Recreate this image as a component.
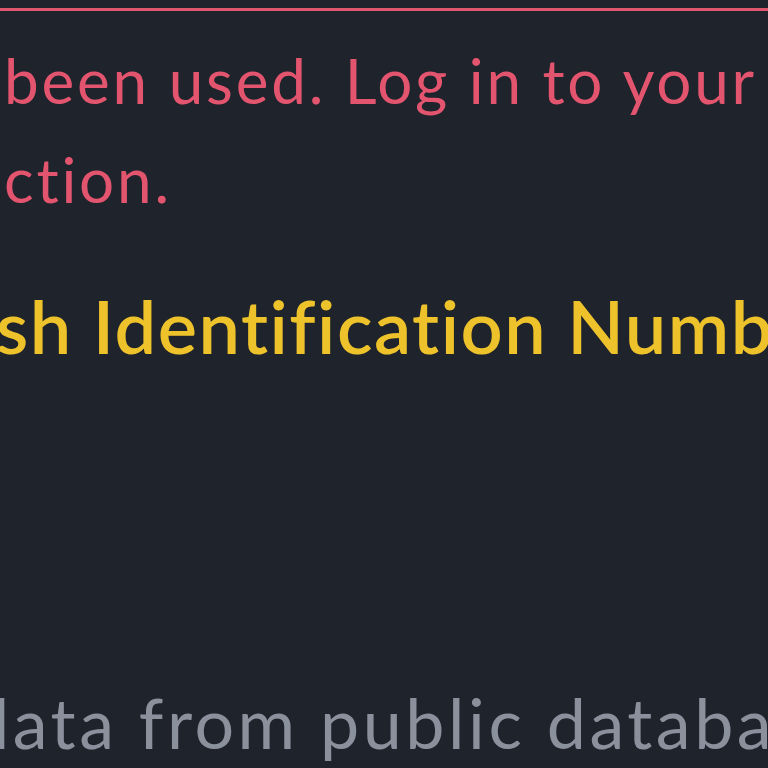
export default function App() {
  return (
    <div className="w-[768px] h-[768px] overflow-hidden bg-[#1f232c] [font-variant-ligatures:none]" style={{ fontFamily: 'Lato, "Open Sans", sans-serif' }}>
      <div className="mt-[8px] h-[3px] bg-[#e0566f] w-full" />
      <div className="mt-[20px] pl-[4px] text-[#e3556f] text-[62px] leading-[99px] tracking-[2.8px] whitespace-nowrap">
        <div>been used. Log in to your account</div>
        <div>ction.</div>
      </div>
      <div className="mt-[52px] ml-[-4px] text-[#eec22a] text-[74px] font-semibold leading-[90px] tracking-[1.5px] whitespace-nowrap">
        sh Identification Number
      </div>
      <div className="mt-[306px] ml-[-30px] text-[#8b919c] text-[70px] leading-[90px] tracking-[3.5px] whitespace-nowrap">
        data from public databases
      </div>
    </div>
  );
}
